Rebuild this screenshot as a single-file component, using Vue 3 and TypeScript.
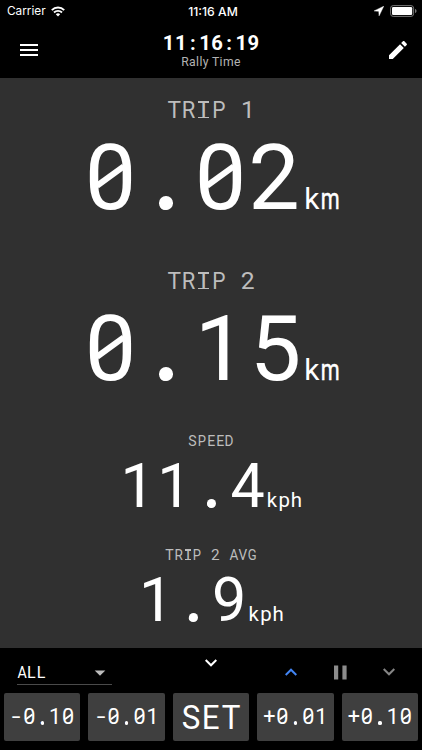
<script setup lang="ts">
import { defineComponent, h } from 'vue'

// Fixed-pitch text: every character sits in its own equally wide cell.
const glyphNames: Record<string, string> = {
  '0': 'zero',
  '2': 'two',
  '.': 'dot',
  '-': 'minus',
  I: 'cap-i',
  A: 'cap-a',
  R: 'cap-r',
  G: 'cap-g',
  V: 'cap-v',
  D: 'cap-d',
  P: 'cap-p',
  T: 'cap-t',
  S: 'cap-s',
  E: 'cap-e',
  m: 'low-m',
}

const MonoText = defineComponent({
  props: { text: { type: String, required: true } },
  setup(props) {
    return () =>
      h(
        'span',
        { class: 'mono' },
        [...props.text].map((c) =>
          h('span', { class: 'cell' }, [
            h('span', { class: ['glyph', glyphNames[c]] }, c === ' ' ? '\u00a0' : c),
          ]),
        ),
      )
  },
})

interface Reading {
  label: string
  value: string
  unit: string
  size: 'large' | 'small'
}

const readings: Reading[] = [
  { label: 'TRIP 1', value: '0.02', unit: 'km', size: 'large' },
  { label: 'TRIP 2', value: '0.15', unit: 'km', size: 'large' },
  { label: 'SPEED', value: '11.4', unit: 'kph', size: 'small' },
  { label: 'TRIP 2 AVG', value: '1.9', unit: 'kph', size: 'small' },
]

const adjustments: string[] = ['-0.10', '-0.01', 'SET', '+0.01', '+0.10']
</script>

<template>
  <div class="screen">
    <header class="top">
      <div class="status">
        <div class="carrier">
          <span>Carrier</span>
          <svg width="14" height="11" viewBox="0 0 14 11" fill="none" stroke="#fff" stroke-width="1.9">
            <path d="M0.8 4.1a8.8 8.8 0 0 1 12.4 0" />
            <path d="M3 6.5a5.7 5.7 0 0 1 8 0" />
            <path d="M7 10.6L4.8 8.3a3.2 3.2 0 0 1 4.4 0z" fill="#fff" stroke="none" />
          </svg>
        </div>
        <div class="clock">11:16 AM</div>
        <div class="indicators">
          <svg width="10" height="10" viewBox="0 0 10 10"><path d="M9.7 0.3L0.2 4.9L4.8 5.2L5.1 9.8z" fill="#fff" stroke="#fff" stroke-width="0.5" /></svg>
          <svg width="27" height="12" viewBox="0 0 27 12">
            <rect x="0.6" y="0.6" width="23" height="10.8" rx="2.6" fill="none" stroke="#777" stroke-width="1" />
            <rect x="2" y="2" width="20.2" height="8" rx="1.3" fill="#fff" />
            <path d="M25 4v4c1-.4 1.5-1.1 1.5-2S26 4.400 25 4z" fill="#777" />
          </svg>
        </div>
      </div>
      <div class="toolbar">
        <svg class="menu" width="18" height="12" viewBox="0 0 18 12" fill="#fff">
          <path d="M0 0h18v2H0zM0 5h18v2H0zM0 10h18v2H0z" />
        </svg>
        <div class="title">
          <div class="time"><MonoText text="11:16:19" /></div>
          <div class="subtitle">Rally Time</div>
        </div>
        <svg class="edit" width="24" height="24" viewBox="0 0 24 24" fill="#fff">
          <path d="M3 17.250V21h3.750L17.810 9.940l-3.750-3.750L3 17.250zM20.710 7.040c.39-.39.39-1.020 0-1.410l-2.340-2.340c-.39-.39-1.020-.39-1.410 0l-1.830 1.830 3.750 3.750 1.830-1.830z" />
        </svg>
      </div>
    </header>

    <main class="readings">
      <section v-for="r in readings" :key="r.label" class="reading" :class="r.size">
        <div class="label"><MonoText :text="r.label" /></div>
        <div class="figure">
          <div class="value"><MonoText :text="r.value" /></div>
          <div class="unit"><MonoText :text="r.unit" /></div>
        </div>
      </section>
    </main>

    <footer class="panel">
      <div class="controls">
        <div class="select">
          <MonoText text="ALL" />
          <svg width="12" height="6" viewBox="0 0 12 6"><path d="M0.700 0.400h10.600L6 5.700z" fill="#bdbdbd" /></svg>
        </div>
        <svg class="collapse" width="12" height="8" viewBox="0 0 12 8" fill="none" stroke="#fff" stroke-width="2"><path d="M0.700 1L6 6.300L11.300 1" /></svg>
        <div class="steps">
          <svg class="up" width="12" height="8" viewBox="0 0 12 8" fill="none" stroke="#4285f4" stroke-width="2"><path d="M0.700 7L6 1.700L11.300 7" /></svg>
          <svg width="13" height="15" viewBox="0 0 13 15" fill="#8c8c8c"><path d="M0 0.500h4.200v14H0zM8.400 0.500h4.200v14H8.400z" /></svg>
          <svg width="12" height="8" viewBox="0 0 12 8" fill="none" stroke="#858585" stroke-width="2"><path d="M0.700 1L6 6.300L11.300 1" /></svg>
        </div>
      </div>
      <div class="buttons">
        <button v-for="a in adjustments" :key="a" type="button" :class="{ set: a === 'SET' }">
          <MonoText :text="a" />
        </button>
      </div>
    </footer>
  </div>
</template>

<style>
body {
  margin: 0;
  background: #000;
}
.mono {
  display: inline-block;
  white-space: nowrap;
}
.mono .cell {
  display: inline-flex;
  justify-content: center;
  width: 0.6em;
}
.mono .glyph {
  position: relative;
  display: block;
  flex: none;
}
.mono .zero::after {
  content: '';
  position: absolute;
  left: 50%;
  top: 50%;
  width: 0.36em;
  height: 0.07em;
  margin: -0.045em 0 0 -0.18em;
  background: currentColor;
  transform: rotate(-36deg);
}
.mono .two {
  transform: translateX(-0.016em);
}
.mono .dot::after {
  content: '';
  position: absolute;
  left: 50%;
  top: calc(50% + 0.205em);
  width: 0.15em;
  height: 0.15em;
  margin-left: -0.068em;
  border-radius: 50%;
  background: currentColor;
}
.mono .minus {
  transform: scaleX(1.45);
}
.mono .cap-i::before,
.mono .cap-i::after {
  content: '';
  position: absolute;
  left: 50%;
  width: 0.43em;
  height: 0.078em;
  margin-left: -0.215em;
  background: currentColor;
}
.mono .cap-i::before {
  top: calc(50% - 0.368em);
}
.mono .cap-i::after {
  top: calc(50% + 0.264em);
}
.mono .low-m {
  transform: scaleX(0.72);
  -webkit-text-stroke: 0.015em currentColor;
}
.mono .cap-t,
.mono .cap-s,
.mono .cap-e {
  transform: scaleX(0.92);
}
.mono .cap-a,
.mono .cap-v,
.mono .cap-r,
.mono .cap-d {
  transform: scaleX(0.89);
}
.mono .cap-p,
.mono .cap-g {
  transform: scaleX(0.85);
}
</style>

<style scoped>
.screen {
  display: flex;
  flex-direction: column;
  width: 422px;
  height: 750px;
  overflow: hidden;
  background: #303030;
  color: #fff;
  font-family: Roboto, 'Liberation Sans', sans-serif;
}
svg {
  display: block;
}
.top {
  height: 78px;
  background: #000;
}
.status {
  display: grid;
  grid-template-columns: 1fr auto 1fr;
  align-items: center;
  height: 22px;
  padding: 0 5px 0 7px;
  font-family: Inter, sans-serif;
  font-size: 11.8px;
}
.carrier {
  display: flex;
  align-items: center;
  gap: 5px;
}
.clock {
  padding-left: 2px;
  font-weight: 500;
  font-size: 12.2px;
}
.indicators {
  display: flex;
  align-items: center;
  justify-content: flex-end;
  gap: 6px;
}
.toolbar {
  display: grid;
  grid-template-columns: 1fr auto 1fr;
  align-items: center;
  height: 56px;
  padding: 0 12px 0 20px;
  box-sizing: border-box;
}
.menu {
  margin-bottom: 1px;
}
.edit {
  justify-self: end;
}
.title {
  display: flex;
  flex-direction: column;
  align-items: center;
  padding-top: 2px;
  margin-left: -8px;
}
.time {
  font-size: 20.2px;
  line-height: 21px;
  font-weight: 700;
}
.subtitle {
  font-size: 12.2px;
  line-height: 16px;
  letter-spacing: 0.35px;
  color: #b3b3b3;
}
.readings {
  height: 570px;
}
.reading {
  display: flex;
  flex-direction: column;
  align-items: center;
  box-sizing: border-box;
}
.figure {
  display: flex;
  align-items: baseline;
}
.label {
  color: #bdbdbd;
}
.large {
  height: 171px;
  padding-top: 17px;
}
.large .label {
  font-size: 24.7px;
  line-height: 30px;
}
.large .value {
  font-size: 91.6px;
  line-height: 105px;
}
.large .unit {
  font-size: 30px;
  line-height: 30px;
}
.small {
  height: 114px;
  padding-top: 11px;
}
.small .label {
  font-size: 15.3px;
  line-height: 20px;
}
.small .value {
  font-size: 61px;
  line-height: 70px;
}
.small .unit {
  font-size: 20.4px;
  line-height: 20px;
}
.panel {
  flex: 1;
  background: #000;
}
.controls {
  display: grid;
  grid-template-columns: 1fr auto 1fr;
  height: 45px;
  padding: 0 27px 0 17px;
}
.select {
  display: flex;
  align-items: center;
  justify-content: space-between;
  width: 95px;
  height: 24px;
  margin-top: 13px;
  padding-right: 6px;
  box-sizing: border-box;
  border-bottom: 1px solid #4a4a4a;
  font-size: 16px;
  line-height: 23px;
}
.collapse {
  margin: 11px 0 0 10px;
}
.steps {
  display: flex;
  align-items: center;
  justify-content: flex-end;
  gap: 36px;
  height: 48px;
}
.up {
  margin-right: 1px;
}
.buttons {
  display: grid;
  grid-template-columns: repeat(5, 1fr);
  gap: 8px;
  padding: 0 4px;
}
.buttons button {
  display: flex;
  align-items: center;
  justify-content: center;
  height: 48px;
  padding: 0;
  border: 0;
  border-radius: 2px;
  background: #3f3f3f;
  color: #fff;
  font-family: inherit;
  font-size: 21.6px;
  line-height: 48px;
}
.buttons .set {
  font-size: 34px;
}
</style>
